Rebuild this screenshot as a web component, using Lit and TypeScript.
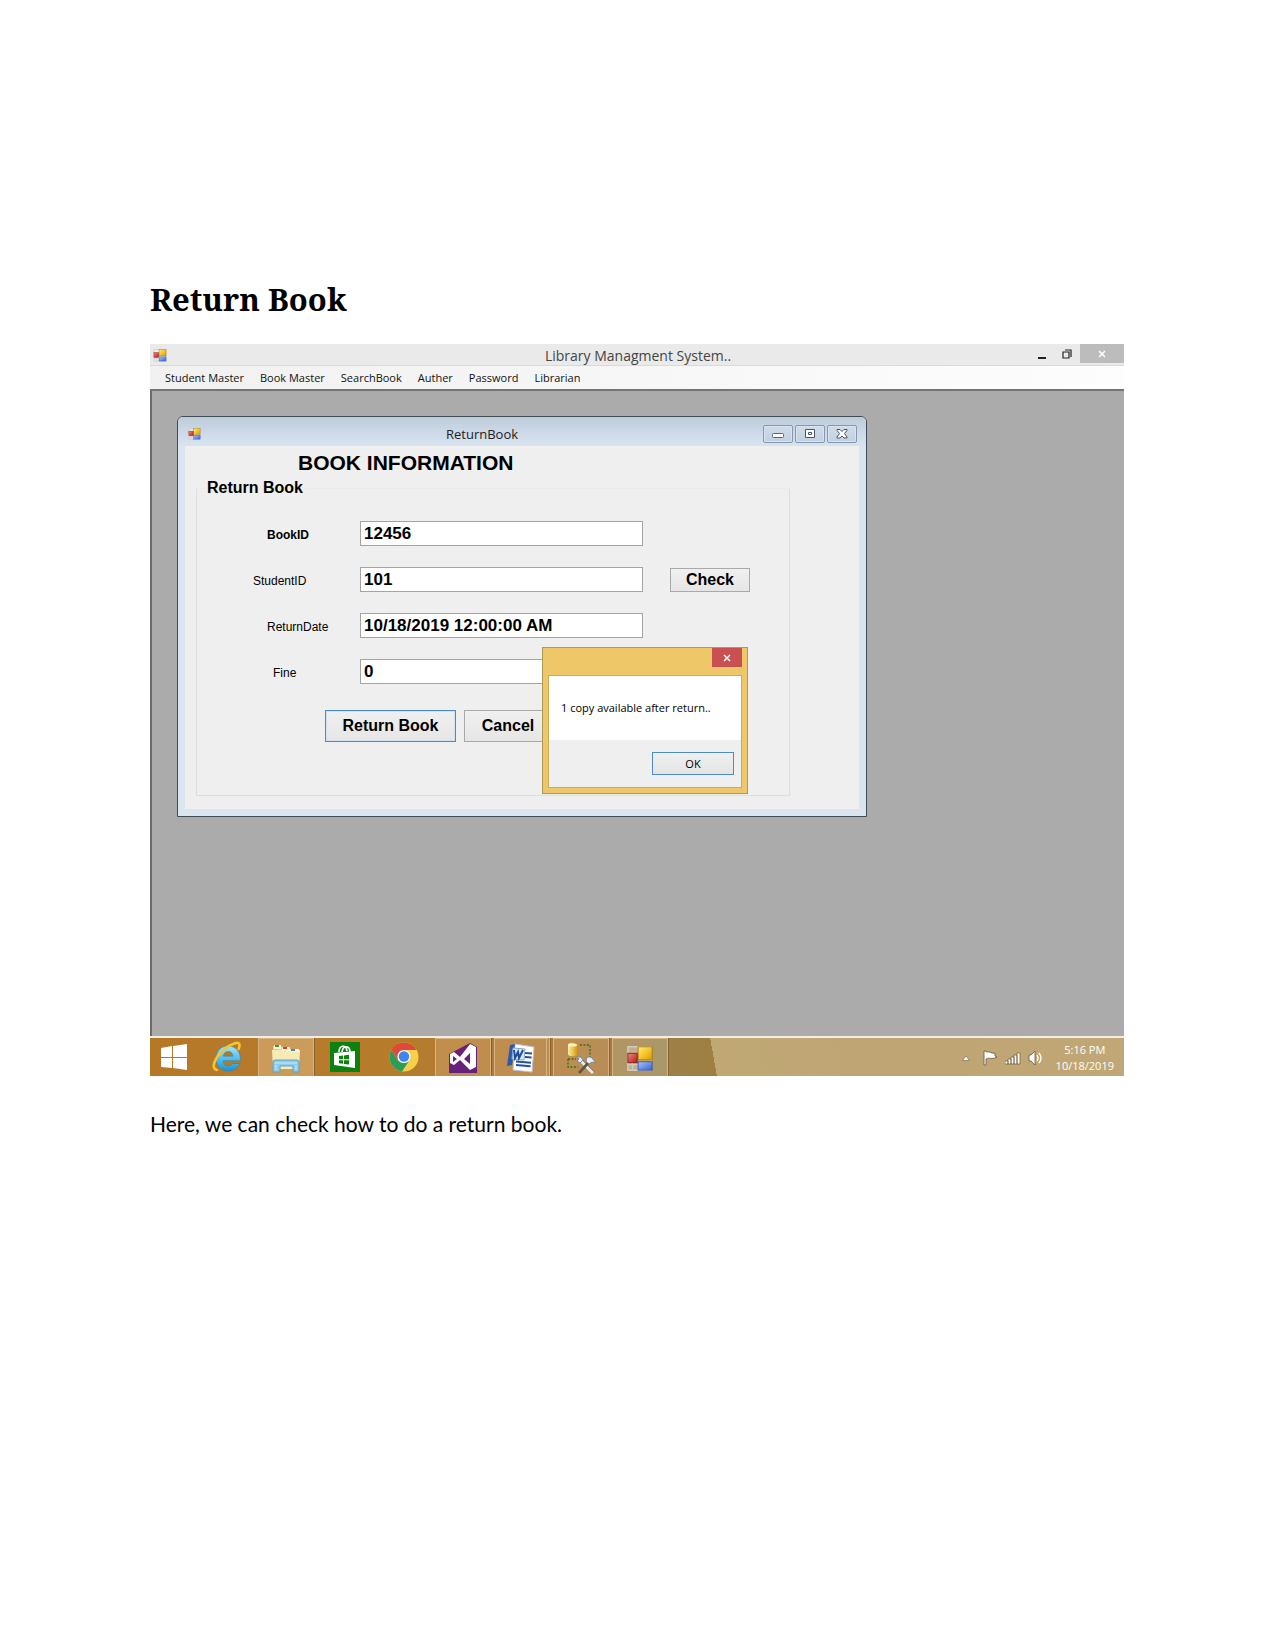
import { LitElement, html, css } from "lit";
import { customElement } from "lit/decorators.js";

const formsIcon = () => html`<svg class="forms-icon" viewBox="0 0 30 30" aria-hidden="true">
  <defs>
    <linearGradient id="fy" x1="0" y1="0" x2="1" y2="1"><stop offset="0" stop-color="#fdeb86"/><stop offset=".5" stop-color="#f3c62c"/><stop offset="1" stop-color="#dc9a08"/></linearGradient>
    <linearGradient id="fr" x1="0" y1="0" x2="1" y2="1"><stop offset="0" stop-color="#f08a7c"/><stop offset="1" stop-color="#b01c1c"/></linearGradient>
    <linearGradient id="fb" x1="0" y1="0" x2="1" y2="1"><stop offset="0" stop-color="#a8c4fa"/><stop offset="1" stop-color="#3a62d0"/></linearGradient>
  </defs>
  <path d="M2 3h25v25H2z" fill="#fff" fill-opacity=".25" stroke="#d0cabf" stroke-width="1.6"/>
  <path d="M7 19v9M2 22h11" stroke="#d0cabf" stroke-width="1.4"/>
  <rect x="13" y="3" width="15" height="14" fill="url(#fy)" stroke="#a87c14"/>
  <rect x="2" y="10" width="10" height="10" fill="url(#fr)" stroke="#8c2020"/>
  <rect x="13" y="19" width="15" height="9" fill="url(#fb)" stroke="#3c58a8"/>
</svg>`;

const startIcon = () => html`<svg width="28" height="28" viewBox="0 0 28 28" aria-hidden="true">
  <path fill="#fff" d="M1 5l11-2v11H1zM13 3l14-2v13H13zM1 15h11v10L1 24zM13 15h14v12l-14-2z"/>
</svg>`;

const ieIcon = () => html`<svg width="32" height="32" viewBox="0 0 32 32" aria-hidden="true">
  <defs><linearGradient id="ie" x1="0" y1="0" x2="0" y2="1"><stop offset="0" stop-color="#a4e4fb"/><stop offset=".55" stop-color="#4cbcec"/><stop offset="1" stop-color="#2590cc"/></linearGradient></defs>
  <path fill="url(#ie)" stroke="#2a86b8" stroke-width=".6" d="M17 5C9 5 5 11 5 17.500C5 25 10 30 17.500 30C23 30 27 27 29 22.500H21.500C20.500 24 19 24.800 17.200 24.800C14.300 24.800 12.300 22.800 12.200 19.800H29.500C30 11 25 5 17 5ZM12.400 15.200C12.700 12.400 14.600 10.600 17.200 10.600C20 10.600 21.800 12.400 22 15.200Z"/>
  <path fill="none" stroke="#f6c432" stroke-width="2.600" stroke-linecap="round" d="M6 29C-1 28 4 16 13 8.500C20 2.500 28 0 28.500 3.500C28.700 5 28.200 6.500 27.600 8"/>
</svg>`;

const explorerIcon = () => html`<svg width="32" height="32" viewBox="0 0 32 32" aria-hidden="true">
  <path fill="#e9cf7c" d="M3 4h8l2 3h16v20H3z"/>
  <path fill="#f7ebb4" d="M2 8h28l-1 19H3z"/>
  <path fill="#fbf4d4" d="M4 3h7v4H4zM12 5h8v4h-8zM20 7h9v3h-9z"/>
  <path fill="#3c9a3c" d="M5 3h4v2H5z"/><path fill="#d04434" d="M13 5h4v2h-4z"/><path fill="#3a88d0" d="M21 7h4v2h-4z"/>
  <path fill="#8fcbea" stroke="#5aa2cc" d="M3 19l2-1h22l2 1v11h-6v-6H10v6H3z"/>
  <path stroke="#cdeaf8" d="M5 21h22M6 23v5M26 23v5"/>
</svg>`;

const storeIcon = () => html`<svg width="30" height="30" viewBox="0 0 30 30" aria-hidden="true">
  <path fill="#0b8210" d="M0 0h30v30H0z"/>
  <path fill="#fff" d="M4 11l21-2v17L4 23z"/>
  <path fill="none" stroke="#fff" stroke-width="1.600" d="M9 10c0-7 7-8 8-1M12 10c1-8 8-6 8 0"/>
  <path fill="#0b8210" d="M9 14l4-.5v3.800H9zM14 13.400l5-.6v4.500h-5zM9 18.200h4v3.600L9 21.300zM14 18.200h5v4.400l-5-.7z"/>
</svg>`;

const chromeIcon = () => html`<svg width="30" height="30" viewBox="0 0 30 30" aria-hidden="true">
  <circle cx="15" cy="15" r="14.500" fill="#f8cf48"/>
  <path fill="#dc4a3c" d="M15 15L2.400 7.800A14.500 14.500 0 0 1 27.600 8H15z"/>
  <path fill="#2c9c58" d="M2.400 7.800L9 18.500L15 21L20 19L13 29.400A14.500 14.500 0 0 1 2.400 7.800z"/>
  <path fill="#dc4a3c" d="M2.400 7.800L8.800 18L12 9z"/>
  <circle cx="15" cy="14.500" r="6.600" fill="#f4f4f4"/><circle cx="15" cy="14.500" r="5.200" fill="#3f86ec"/>
</svg>`;

const studioIcon = () => html`<svg width="30" height="32" viewBox="0 0 30 32" aria-hidden="true">
  <path fill="#68217a" d="M1 12L22 1l7 4v26H1z"/>
  <path fill="#fff" fill-rule="evenodd" d="M2 12l4-2 6 5L22 2l6 3v20l-6 3-10-10-6 5-4-2zM5 14v6l4-3zM22 11l-6 6 6 5z"/>
</svg>`;

const wordIcon = () => html`<svg width="30" height="30" viewBox="0 0 30 30" aria-hidden="true">
  <path fill="#fff" stroke="#b8c4dc" d="M9 1l19 3-2 25-19-2z"/>
  <path stroke="#24539c" stroke-width="2" d="M19 10l7 .6M19 14l6.600 .5M10 18.500l15 1.200M10 22l14.600 1.200"/>
  <path fill="#2a5cac" d="M4 2l5-1-3 21-5 1z"/><path fill="#dbe7fb" stroke="#88a4d4" d="M7 5l12 1-1 11-12-1z"/>
  <path fill="none" stroke="#1f4c9a" stroke-width="2" d="M8 7l1 8 3-6 1 6 4-8"/>
</svg>`;

const toolsIcon = () => html`<svg width="32" height="32" viewBox="0 0 32 32" aria-hidden="true">
  <defs><linearGradient id="cy"><stop offset="0" stop-color="#fdf0a0"/><stop offset="1" stop-color="#d89a10"/></linearGradient></defs>
  <path fill="url(#cy)" d="M3 3c0-3 9-3 9 0v9c0 3-9 3-9 0z"/><ellipse cx="7.500" cy="3" rx="4.500" ry="1.600" fill="#fff4b8"/>
  <path fill="none" stroke="#3f6c20" stroke-width="1.400" stroke-dasharray="2 1.500" d="M15 3h10v13M3 17v8h10M3 17h8"/>
  <path stroke="#e8edf2" stroke-width="3" d="M14 17l14 14"/><path stroke="#6f7880" d="M15.500 16l14 14"/>
  <path stroke="#5c554c" stroke-width="2.600" d="M14 31l11-12"/><path fill="#e9eff8" stroke="#7a8898" d="M22 15l4 0 5 6-4-1-3 2-3-3zM12 15l4 0 2 3-3 3-3-2 2-2z"/>
</svg>`;

const tasks = [
  { label: "Internet Explorer", cls: "", icon: ieIcon },
  { label: "File Explorer", cls: "open bright", icon: explorerIcon },
  { label: "Store", cls: "", icon: storeIcon },
  { label: "Chrome", cls: "", icon: chromeIcon },
  { label: "Visual Studio", cls: "open", icon: studioIcon },
  { label: "Word", cls: "open stacked", icon: wordIcon },
  { label: "Designer tools", cls: "open", icon: toolsIcon },
  { label: "Library Managment System", cls: "open active", icon: formsIcon },
];

const fields = [
  { id: "book", label: "BookID", value: "12456", cls: "mid strong" },
  { id: "student", label: "StudentID", value: "101", cls: "near" },
  { id: "date", label: "ReturnDate", value: "10/18/2019 12:00:00 AM", cls: "mid" },
  { id: "fine", label: "Fine", value: "0", cls: "far" },
];

@customElement("app-root")
export class AppRoot extends LitElement {
  static styles = css`
    :host { display: block; background: #fff; color: #000; }
    * { box-sizing: border-box; }
    button { margin: 0; padding: 0; font: inherit; color: inherit; }
    svg { display: block; }
    .page { padding: 276px 151px 0 150px; }
    .heading { margin: 0 0 22px; font: bold 31px/46px "Noto Serif", "Liberation Serif", serif; }
    .caption { margin: 35px 0 0; font: 21px/26px Lato, sans-serif; }
    .app { font-family: "Open Sans", sans-serif; }

    .titlebar { display: flex; align-items: center; height: 22px; background: #eaeaea; border-bottom: 1px solid #d9d9d9; }
    .titlebar .forms-icon { width: 14px; height: 14px; margin-left: 3px; }
    .app-title { flex: 1; margin: 0; padding: 2px 0 0 80px; text-align: center; font: 14px/20px "Open Sans", sans-serif; color: #444; }
    .controls { display: flex; align-self: flex-start; }
    .control { display: grid; place-items: center; width: 25px; height: 19px; border: 0; background: none; }
    .control.close { width: 44px; margin-left: 1px; background: #bcbcbc; }

    .menu { display: flex; gap: 16px; height: 23px; padding-left: 15px; background: linear-gradient(90deg, #f1f1f1, #fdfdfd); }
    .menu a { color: #111; text-decoration: none; font: 11px/24px "Open Sans", sans-serif; }

    .workspace { padding: 25px 0 219px 25px; background: #ababab; border: solid #6b6b6b; border-width: 2px 0 0 2px; border-top-color: #747474; }
    .child { position: relative; width: 690px; max-width: 100%; padding: 0 7px 7px; background: #dbe5ef; border: 1px solid #3f4b55; border-radius: 6px 6px 0 0; }
    .child-bar { display: flex; align-items: center; height: 29px; margin: 0 -7px; padding: 4px 9px 0 10px; border-radius: 5px 5px 0 0; background: linear-gradient(#becbd8, #cad7e6 45%, #d9e4f0); }
    .child-bar .forms-icon { width: 13px; height: 13px; }
    .child-title { flex: 1; margin: 0; text-align: center; font: 13px/20px "Open Sans", sans-serif; color: #222; }
    .child-controls { display: flex; gap: 2px; }
    .child-control { display: grid; place-items: center; width: 30px; height: 18px; border: 1px solid #8396b4; border-radius: 2px; background: linear-gradient(#cfdbe8, #c2d0e0); box-shadow: inset 0 0 0 1px #d9e4f0; }

    .client { padding: 0 69px 13px 11px; background: #efefef; font-family: "Liberation Sans", sans-serif; }
    .client-title { margin: 0; padding-left: 102px; font-size: 21px; line-height: 33px; }
    .group { margin: 0; padding: 24px 0 53px; border: 1px solid #dedede; border-top-color: #ebebeb; min-width: 0; }
    .group legend { margin-left: 8px; padding: 0 2px; font-size: 16px; font-weight: bold; line-height: 18px; }
    .rows { display: grid; gap: 21px; }
    .row { display: grid; grid-template-columns: 163px 283px 80px; align-items: center; height: 25px; }
    .check { margin-left: 27px; }
    .label { padding-top: 3px; font-size: 12px; line-height: 16px; }
    .near { padding-left: 56px; }
    .mid { padding-left: 70px; }
    .far { padding-left: 76px; }
    .strong { font-weight: bold; }
    .field { width: 100%; height: 25px; padding: 0 3px; border: 1px solid #a4a4a4; border-radius: 0; background: #fff; color: #000; font: bold 17px/23px "Liberation Sans", sans-serif; outline: none; }
    .button { border: 1px solid #a9a9a9; background: linear-gradient(#f0f0f0, #e6e6e6); font-size: 16px; font-weight: bold; }
    .check { width: 80px; height: 24px; }
    .actions { display: flex; gap: 8px; margin: 26px 0 0 128px; }
    .action { width: 88px; height: 32px; }
    .primary { width: 131px; border-color: #4d8bc4; box-shadow: inset 0 0 0 1px #cfe2f3; }

    .dialog { position: absolute; left: 364px; top: 230px; width: 206px; padding: 0 5px 5px; background: #eec768; border: 1px solid #a99a58; font-family: "Open Sans", sans-serif; }
    .dialog-bar { display: flex; justify-content: flex-end; height: 27px; }
    .dialog-close { display: grid; place-items: center; width: 30px; height: 19px; border: 0; background: #c94f50; }
    .dialog-body { border: 1px solid #c9ac5c; background: #fff; }
    .message { margin: 0; padding: 23px 0 23px 12px; font: 11px/18px "Open Sans", sans-serif; white-space: nowrap; }
    .dialog-footer { display: flex; justify-content: flex-end; padding: 12px 7px 12px; background: #efefef; }
    .ok { width: 82px; height: 23px; border: 1px solid #4d8bc4; background: linear-gradient(#f0f0f0, #e4e4e4); font-size: 11px; }

    .taskbar { display: flex; align-items: stretch; gap: 3px; height: 40px; border-top: 2px solid #f3eee2; background: linear-gradient(80deg, transparent 57.8%, #c0a874 57.8%, #bfa574 75%, #c1a775 100%), linear-gradient(90deg, #b57827 0, #b67c2c 25%, #ab7b3c 45%, #9c8048 52%, #9f7f40 60%); }
    .task { display: grid; place-items: center; width: 56px; border: 0; background: none; }
    .start { width: 46px; padding-left: 2px; }
    .open { border: 1px solid #d9b283; border-bottom: 0; background: #ffe0c030; box-shadow: 1px 0 0 #8a6030; }
    .bright { background: #ffe8c84d; }
    .stacked { border-right: 4px double #d9b283; }
    .active { background: #d8e0d040; }
    .task .forms-icon { width: 28px; height: 28px; }
    .tray { display: flex; align-items: center; gap: 7px; margin-left: auto; padding: 2px 10px 0 0; color: #fff; }
    .tray-icon { padding: 0; border: 0; background: none; }
    .clock { padding-left: 5px; text-align: center; font: 11px/16px "Open Sans", sans-serif; }
    .clock time { display: block; }
  `;

  render() {
    return html`
      <main class="page">
        <h1 class="heading">Return Book</h1>
        <section class="app">
          <header class="titlebar">
            ${formsIcon()}
            <h2 class="app-title">Library Managment System..</h2>
            <div class="controls">
              <button class="control" aria-label="Minimize"><svg width="10" height="12" viewBox="0 0 10 12"><path d="M1 9h8v2H1z" fill="#222"/></svg></button>
              <button class="control" aria-label="Restore"><svg width="10" height="12" viewBox="0 0 10 12"><path d="M1 4h6v6H1zM3 2h6v7" fill="none" stroke="#222" stroke-width="1.200"/></svg></button>
              <button class="control close" aria-label="Close"><svg width="8" height="8" viewBox="0 0 8 8"><path d="M1 1l6 6M7 1L1 7" stroke="#fff" stroke-width="1.500"/></svg></button>
            </div>
          </header>
          <nav class="menu">
            ${["Student Master", "Book Master", "SearchBook", "Auther", "Password", "Librarian"].map((m) => html`<a href="#">${m}</a>`)}
          </nav>
          <div class="workspace">
            <section class="child">
              <header class="child-bar">
                ${formsIcon()}
                <h3 class="child-title">ReturnBook</h3>
                <div class="child-controls">
                  <button class="child-control" aria-label="Minimize"><svg width="12" height="12" viewBox="0 0 12 12"><rect x=".5" y="5.500" width="11" height="4" rx="1" fill="#fff" stroke="#5b6478"/></svg></button>
                  <button class="child-control" aria-label="Maximize"><svg width="12" height="12" viewBox="0 0 12 12"><path d="M1.500 1.500h9v8h-9z" fill="#fff" stroke="#4b5468"/><path d="M4.500 4.500h3v2h-3z" fill="#fff" stroke="#4b5468"/></svg></button>
                  <button class="child-control" aria-label="Close"><svg width="12" height="12" viewBox="0 0 12 12"><path d="M1 1.500h3l2 2 2-2h3v1L8.500 5.500 11 9v1H8L6 8l-2 2H1V9l2.500-3.500L1 2.500z" fill="#fff" stroke="#4b5468"/></svg></button>
                </div>
              </header>
              <div class="client">
                <h2 class="client-title">BOOK INFORMATION</h2>
                <fieldset class="group">
                  <legend>Return Book</legend>
                  <div class="rows">
                    ${fields.map((f) => html`<div class="row">
                      <label class="label ${f.cls}" for=${f.id}>${f.label}</label>
                      <input class="field" id=${f.id} type="text" .value=${f.value} />
                      ${f.id === "student" ? html`<button class="button check">Check</button>` : null}
                    </div>`)}
                  </div>
                  <div class="actions">
                    <button class="button action primary">Return Book</button>
                    <button class="button action">Cancel</button>
                  </div>
                </fieldset>
              </div>
              <section class="dialog" role="dialog" aria-label="Message">
                <div class="dialog-bar">
                  <button class="dialog-close" aria-label="Close"><svg width="8" height="8" viewBox="0 0 8 8"><path d="M1 1l6 6M7 1L1 7" stroke="#fff" stroke-width="1.500"/></svg></button>
                </div>
                <div class="dialog-body">
                  <p class="message">1 copy available after return..</p>
                  <div class="dialog-footer"><button class="ok">OK</button></div>
                </div>
              </section>
            </section>
          </div>
          <footer class="taskbar">
            <button class="task start" aria-label="Start">${startIcon()}</button>
            ${tasks.map((t) => html`<button class="task ${t.cls}" aria-label=${t.label}>${t.icon()}</button>`)}
            <div class="tray">
              <button class="tray-icon" aria-label="Show hidden icons"><svg width="14" height="8" viewBox="0 0 14 8"><path d="M1.500 6.500L5 2l3.500 4.500z" fill="#fff" stroke="#75623e" stroke-width=".6"/></svg></button>
              <button class="tray-icon" aria-label="Action center"><svg width="16" height="16" viewBox="0 0 16 16"><path d="M2 1v14h2V9c4-2 5 1 11-2l-2-1V3C9 4 8 1 4 2V1z" fill="#fff" stroke="#6b5733" stroke-width=".8"/></svg></button>
              <button class="tray-icon" aria-label="Network"><svg width="16" height="16" viewBox="0 0 16 16"><path d="M0 11h3v3H0zM3 9h3v5H3zM6 7h3v7H6zM9 5h3v9H9zM12 3h3v11h-3z" fill="#fff" stroke="#6b5733" stroke-width=".7"/></svg></button>
              <button class="tray-icon" aria-label="Volume"><svg width="16" height="16" viewBox="0 0 16 16"><path d="M1 5h2l4-4v14l-4-4H1z" fill="#fff" stroke="#6b5733" stroke-width=".8"/><path d="M9 5q2 3 0 6M11 3q4 5 0 10" fill="none" stroke="#fff" stroke-width="1.300"/></svg></button>
              <div class="clock"><time>5:16 PM</time><time>10/18/2019</time></div>
            </div>
          </footer>
        </section>
        <p class="caption">Here, we can check how to do a return book.</p>
      </main>
    `;
  }
}
